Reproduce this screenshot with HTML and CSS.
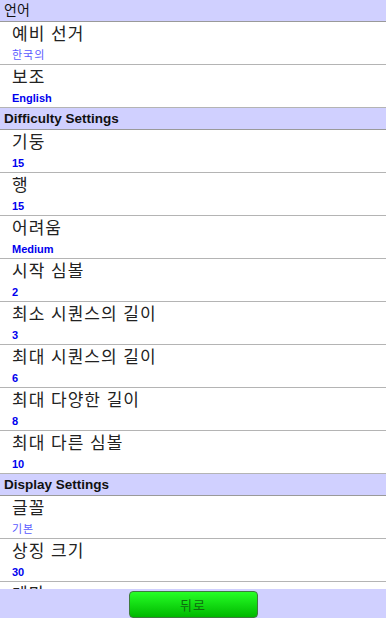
FILE: index.html
```html
<!DOCTYPE html>
<html>
<head>
  <meta charset="UTF-8">
  <title>설정</title>
  <link rel="stylesheet" href="styles.css">
</head>
<body>
  <!-- Scrolling settings list -->
  <div id="settings">
    <div class="section">언어</div>
    <div class="row">
      <div class="title">예비 선거</div>
      <div class="value ko">한국의</div>
    </div>
    <div class="row">
      <div class="title">보조</div>
      <div class="value">English</div>
    </div>

    <div class="section en">Difficulty Settings</div>
    <div class="row">
      <div class="title">기둥</div>
      <div class="value">15</div>
    </div>
    <div class="row">
      <div class="title">행</div>
      <div class="value">15</div>
    </div>
    <div class="row">
      <div class="title">어려움</div>
      <div class="value">Medium</div>
    </div>
    <div class="row">
      <div class="title">시작 심볼</div>
      <div class="value">2</div>
    </div>
    <div class="row">
      <div class="title">최소 시퀀스의 길이</div>
      <div class="value">3</div>
    </div>
    <div class="row">
      <div class="title">최대 시퀀스의 길이</div>
      <div class="value">6</div>
    </div>
    <div class="row">
      <div class="title">최대 다양한 길이</div>
      <div class="value">8</div>
    </div>
    <div class="row">
      <div class="title">최대 다른 심볼</div>
      <div class="value">10</div>
    </div>

    <div class="section en">Display Settings</div>
    <div class="row">
      <div class="title">글꼴</div>
      <div class="value ko">기본</div>
    </div>
    <div class="row">
      <div class="title">상징 크기</div>
      <div class="value">30</div>
    </div>
    <div class="row">
      <div class="title">테마</div>
    </div>
  </div>

  <!-- Bottom bar with back button -->
  <div id="footer">
    <button id="back">뒤로</button>
  </div>
</body>
</html>
```

FILE: styles.css
```css
body {
  margin: 0;
  padding: 0;
  height: 618px;
  display: flex;
  flex-direction: column;
  overflow: hidden;
  background: #ffffff;
  font-family: "Liberation Sans", "Noto Sans CJK KR", sans-serif;
}
/* Settings list */
#settings {
  flex: 1;
  overflow: hidden;
  display: flex;
  flex-direction: column;
}
.section {
  flex: none;
  height: 21px;
  line-height: 21px;
  padding-left: 4px;
  background: #d0d0ff;
  border-bottom: 1px solid #9a9a9a;
  font-size: 14px;
  color: #111;
}
.section.en {
  font-weight: bold;
  font-size: 13.5px;
}
.row {
  flex: none;
  height: 39px;
  padding: 3px 0 0 12px;
  border-bottom: 1px solid #b4b4b4;
}
.title {
  font-size: 17px;
  line-height: 20px;
  letter-spacing: 1px;
  color: #222;
}
.value {
  margin-top: 2px;
  font-size: 11px;
  line-height: 16px;
  font-weight: bold;
  color: #0000ee;
}
.value.ko {
  font-weight: normal;
  letter-spacing: 1px;
  color: #5a5aff;
}
/* Footer */
#footer {
  flex: none;
  height: 29px;
  background: #d0d0ff;
  display: flex;
  justify-content: center;
  align-items: center;
}
#back {
  width: 129px;
  height: 27px;
  margin-top: 1px;
  border: 1px solid #3f7a3f;
  border-radius: 4px;
  background: linear-gradient(#26ff26, #00b800);
  color: #0f6a0f;
  font-family: "Noto Sans CJK KR", sans-serif;
  font-size: 13px;
  letter-spacing: 1px;
  padding: 0;
}
```
